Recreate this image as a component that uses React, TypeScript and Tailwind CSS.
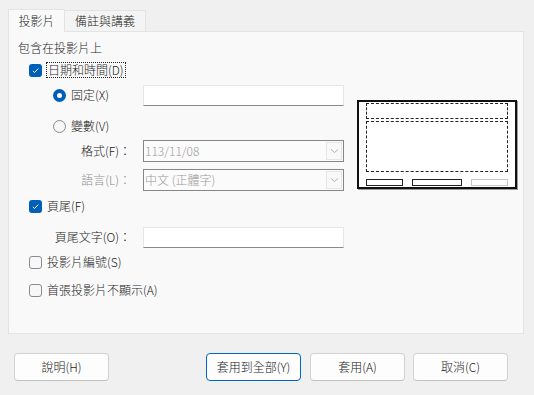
import { ReactNode } from 'react';

const font = { fontFamily: '"Noto Sans CJK TC", "Noto Sans", sans-serif' };

function CheckBox({ checked }: { checked?: boolean }) {
  if (checked) {
    return (
      <span className="w-[13px] h-[13px] rounded-[3px] bg-[#005fb8] flex items-center justify-center shrink-0">
        <svg width="9" height="9" viewBox="0 0 9 9">
          <path d="M1.8 4.8 L3.6 6.5 L7.2 2.6" fill="none" stroke="#ffffff" strokeWidth="1" />
        </svg>
      </span>
    );
  }
  return <span className="w-[13px] h-[13px] rounded-[3px] border border-[#8a8a8a] bg-[#f7f7f7] shrink-0" />;
}

function Radio({ checked }: { checked?: boolean }) {
  if (checked) {
    return (
      <span className="w-[13px] h-[13px] rounded-full bg-[#005fb8] flex items-center justify-center shrink-0">
        <span className="w-[5px] h-[5px] rounded-full bg-white block" />
      </span>
    );
  }
  return <span className="w-[13px] h-[13px] rounded-full border border-[#8a8a8a] bg-[#f7f7f7] shrink-0" />;
}

function TextBox() {
  return <div className="w-[201px] h-[21px] bg-white border border-[#e6e6e6] border-b-[#8a8a8a]" />;
}

function Select({ value }: { value: string }) {
  return (
    <div className="w-[201px] h-[22px] bg-[#fbfbfb] border border-[#868686] flex items-center pl-[1px] pr-[1px]">
      <span className="flex-1 text-[12px] text-[#9a9a9a] leading-none">{value}</span>
      <span className="w-[16px] h-[18px] border border-[#e6e6e6] bg-[#f9f9f9] flex items-center justify-center">
        <svg width="9" height="6" viewBox="0 0 9 6">
          <path d="M1 1.5 L4.5 4.5 L8 1.5" fill="none" stroke="#a8a8a8" strokeWidth="0.9" />
        </svg>
      </span>
    </div>
  );
}

function Row({ className, children }: { className: string; children: ReactNode }) {
  return <div className={`h-[22px] flex items-center ${className}`}>{children}</div>;
}

function Button({ label, primary, className = '' }: { label: string; primary?: boolean; className?: string }) {
  return (
    <div
      className={`w-[95px] h-[28px] rounded-[4px] bg-[#fdfdfd] flex items-center justify-center text-[12px] text-[#1b1b1b] border ${
        primary ? 'border-[#0067c0]' : 'border-[#d3d3d3] border-b-[#c2c2c2]'
      } ${className}`}
    >
      {label}
    </div>
  );
}

export default function App() {
  return (
    <div className="w-[534px] h-[395px] bg-[#f0f0f0] text-[#1b1b1b] font-light overflow-hidden" style={font}>
      {/* tabs */}
      <div className="flex items-end pl-[8px] pt-[9px] h-[32px] relative z-10">
        <div className="w-[57px] h-[23px] bg-[#f9f9f9] border border-b-0 border-[#e3e3e3] flex items-center justify-center text-[12px]">
          投影片
        </div>
        <div className="w-[81px] h-[21px] mb-[1px] bg-[#f4f4f4] border border-l-0 border-b-0 border-[#e3e3e3] flex items-center justify-center text-[12px]">
          備註與講義
        </div>
      </div>

      {/* panel */}
      <div className="ml-[8px] -mt-[1px] w-[516px] h-[303px] bg-[#f9f9f9] border border-[#e3e3e3] flex">
        <div className="w-[348px] pl-[9px] text-[12px]">
          <div className="mt-[8px] h-[16px] flex items-center">包含在投影片上</div>

          <Row className="mt-[3px] pl-[11px] gap-[4px]">
            <CheckBox checked />
            <span className="border border-dotted border-[#222] px-[1px] leading-[14px]">日期和時間(D)</span>
          </Row>

          <Row className="mt-[3px] pl-[35px]">
            <Radio checked />
            <span className="w-[77px] pl-[5px]">固定(X)</span>
            <TextBox />
          </Row>

          <Row className="mt-[9px] pl-[35px] gap-[5px]">
            <Radio />
            <span>變數(V)</span>
          </Row>

          <Row className="mt-[3px]">
            <span className="w-[117px] text-right pr-[4px]">格式(F)：</span>
            <span className="w-[8px]" />
            <Select value="113/11/08" />
          </Row>

          <Row className="mt-[7px]">
            <span className="w-[117px] text-right pr-[4px] text-[#8f8f8f]">語言(L)：</span>
            <span className="w-[8px]" />
            <Select value="中文 (正體字)" />
          </Row>

          <Row className="mt-[4px] pl-[11px] gap-[5px]">
            <CheckBox checked />
            <span>頁尾(F)</span>
          </Row>

          <Row className="mt-[9px]">
            <span className="w-[117px] text-right pr-[4px]">頁尾文字(O)：</span>
            <span className="w-[8px]" />
            <TextBox />
          </Row>

          <Row className="mt-[3px] pl-[11px] gap-[5px]">
            <CheckBox />
            <span>投影片編號(S)</span>
          </Row>

          <Row className="mt-[6px] pl-[11px] gap-[5px]">
            <CheckBox />
            <span>首張投影片不顯示(A)</span>
          </Row>
        </div>

        {/* preview */}
        <div className="pt-[68px] pl-[0px]">
          <div className="w-[160px] h-[89px] bg-white border-2 border-[#111] shadow-[1px_1px_0_#9a9a9a] px-[7px] pt-[1px] flex flex-col">
            <div className="h-[16px] border border-dashed border-[#222]" />
            <div className="mt-[2px] h-[51px] border border-dashed border-[#222]" />
            <div className="mt-[7px] flex">
              <div className="w-[37px] h-[7px] border border-[#222]" />
              <div className="ml-[9px] w-[50px] h-[7px] border border-[#222]" />
              <div className="ml-[9px] w-[37px] h-[7px] border border-[#c8c8c8]" />
            </div>
          </div>
        </div>
      </div>

      {/* buttons */}
      <div className="mt-[19px] pl-[14px] flex">
        <Button label="說明(H)" />
        <Button label="套用到全部(Y)" primary className="ml-[97px]" />
        <Button label="套用(A)" className="ml-[9px]" />
        <Button label="取消(C)" className="ml-[8px]" />
      </div>
    </div>
  );
}
